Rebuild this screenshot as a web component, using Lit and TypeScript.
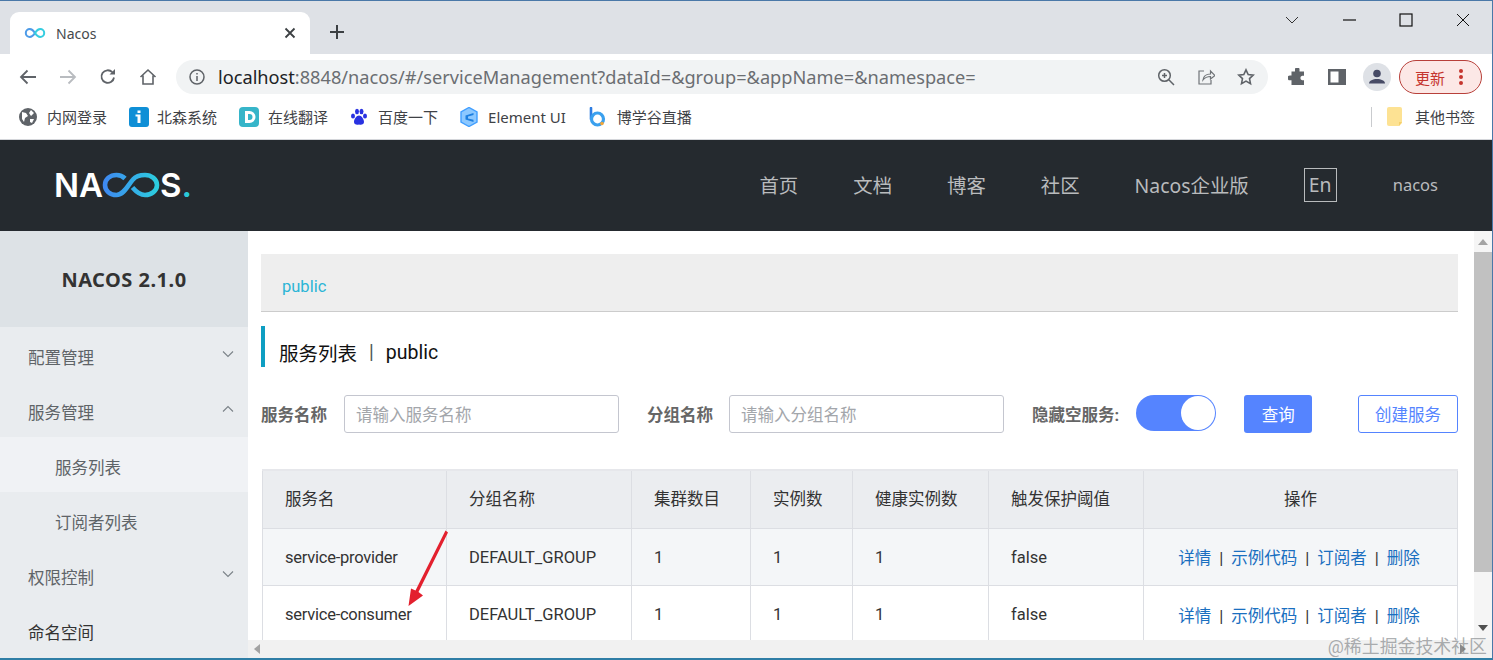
import { LitElement, html, css } from 'lit';
import { customElement } from 'lit/decorators.js';

const chevron = (up: boolean) => html`<svg class="chev" width="14" height="14" viewBox="0 0 14 14" fill="none" stroke="#7b8288" stroke-width="1.1">
  <path d=${up ? 'M2 9.5L7 4.5L12 9.5' : 'M2 4.5L7 9.5L12 4.5'}></path></svg>`;

const services = ['service-provider', 'service-consumer'];
const menu = [
  { label: '配置管理', arrow: 'down' },
  { label: '服务管理', arrow: 'up' },
  { label: '服务列表', sub: true, active: true },
  { label: '订阅者列表', sub: true },
  { label: '权限控制', arrow: 'down' },
  { label: '命名空间' },
];
const heads = ['服务名', '分组名称', '集群数目', '实例数', '健康实例数', '触发保护阈值', '操作'];

@customElement('app-root')
export class AppRoot extends LitElement {
  static styles = css`
    :host {
      display: block;
      width: 1493px;
      height: 660px;
      overflow: hidden;
      position: relative;
      font-family: Roboto, 'Noto Sans CJK SC', sans-serif;
      color: #333;
    }
    * { box-sizing: border-box; }
    .window {
      height: 660px;
      display: flex;
      flex-direction: column;
      border-top: 1px solid #4a78a8;
      border-right: 1px solid #4a78a8;
      border-bottom: 2px solid #2f7ea6;
    }

    /* browser chrome */
    .tabs {
      height: 53px;
      flex: none;
      background: #dee1e6;
      display: flex;
      align-items: flex-end;
      padding-left: 10px;
      position: relative;
    }
    .tab {
      width: 300px;
      height: 42px;
      background: #fff;
      border-radius: 9px 9px 0 0;
      display: flex;
      align-items: center;
      padding: 0 13px 0 14px;
      font-family: 'Noto Sans', sans-serif;
      font-size: 14px;
      color: #45494d;
    }
    .tab .title { margin-left: 10px; flex: 1; }
    .plus { margin: 0 0 7px 19px; align-self: flex-end; height: 30px; display: flex; align-items: center; }
    .win-btns {
      margin-left: auto;
      display: flex;
      align-self: flex-start;
      align-items: center;
      height: 38px;
      padding-right: 22px;
      gap: 43px;
    }
    .toolbar {
      height: 40px;
      margin-top: 3px;
      flex: none;
      display: flex;
      align-items: center;
      padding-left: 8px;
      background: #fff;
    }
    .tool { width: 40px; height: 34px; display: flex; align-items: center; justify-content: center; flex: none; }
    .tool.puzzle { margin-left: 9px; }
    .address {
      margin-left: 8px;
      width: 1092px;
      height: 34px;
      border-radius: 17px;
      background: #f1f3f4;
      display: flex;
      align-items: center;
      padding: 0 2px 0 13px;
      flex: none;
    }
    .url {
      margin-left: 13px;
      flex: 1;
      font-family: 'Noto Sans', sans-serif;
      font-size: 18.2px;
      color: #6b6e72;
      white-space: nowrap;
    }
    .url b { font-weight: 400; color: #202124; }
    .pill {
      margin-left: 2px;
      width: 83px;
      height: 34px;
      border: 1.5px solid #b8403a;
      border-radius: 17px;
      background: #fce8e6;
      color: #c5352e;
      font-size: 15px;
      display: flex;
      align-items: center;
      padding-left: 15px;
    }
    .pill .dots { margin-left: 13px; display: flex; }
    .bookmarks {
      height: 43px;
      flex: none;
      display: flex;
      align-items: center;
      padding: 0 17px 3px 19px;
      gap: 22px;
      font-size: 15px;
      color: #3f4246;
      border-bottom: 1px solid #d4d6da;
      background: #fff;
    }
    .bm { display: flex; align-items: center; gap: 10px; white-space: nowrap; }
    .bm svg { flex: none; }
    .bm .tight { margin-left: -1px; }
    .bm .tighter { margin-left: -2px; }
    .bm .latin { font-family: 'Noto Sans', sans-serif; font-size: 15px; }
    .bm-other { margin-left: auto; display: flex; align-items: center; gap: 12px; }
    .bm-sep { width: 1px; height: 20px; background: #c9cbce; margin-right: 3px; }

    /* nacos header */
    .header {
      height: 91px;
      flex: none;
      background: #252a2f;
      display: flex;
      align-items: center;
      padding: 0 54px 0 54px;
      color: #b9bbbd;
      font-size: 19.4px;
      font-family: 'Noto Sans', 'Noto Sans CJK SC', sans-serif;
    }
    .logo {
      display: flex;
      align-items: center;
      color: #fff;
      font-family: Inter, 'Noto Sans', sans-serif;
      font-weight: 600;
      font-size: 33px;
      margin-top: -2px;
    }
    .logo .dot { color: #2bc9d8; }
    .logo svg { margin: 0 0 0 -1px; }
    .nav { margin-left: auto; display: flex; align-items: center; gap: 55px; margin-top: -2px; }
    .lang {
      width: 33px;
      height: 34px;
      margin-right: 1px;
      border: 1px solid #b9bbbd;
      display: flex;
      align-items: center;
      justify-content: center;
    }
    .user { font-size: 16.5px; }

    /* page body */
    .body { flex: 1; min-height: 0; display: flex; }
    .sidebar { width: 248px; flex: none; background: #e9ecef; }
    .version {
      height: 96px;
      background: #dde2e6;
      display: flex;
      align-items: center;
      justify-content: center;
      font-family: 'Noto Sans', sans-serif;
      font-size: 20px;
      font-weight: 700;
      letter-spacing: .5px;
      color: #333;
    }
    .item {
      height: 55px;
      display: flex;
      align-items: center;
      justify-content: space-between;
      padding: 4px 13px 0 28px;
      font-size: 16.5px;
      color: #5f6468;
    }
    .item .chev { margin-top: -6px; }
    .item.sub { padding-left: 55px; }
    .item.active { background: #f0f2f5; }
    .item.last { color: #333; }

    .main { flex: 1; min-width: 0; display: flex; flex-direction: column; background: #fff; }
    .row { flex: 1; min-height: 0; display: flex; }
    .content { flex: 1; min-width: 0; overflow: hidden; padding: 23px 16px 0 13px; }
    .crumb {
      height: 58px;
      background: #eee;
      border-bottom: 1px solid #ccc;
      padding: 20px 0 0 21px;
      font-size: 16.5px;
      line-height: 26px;
      color: #2bb5d6;
    }
    .page-title {
      margin-top: 14px;
      height: 41px;
      border-left: 4px solid #0e9ec2;
      padding: 12px 0 0 14px;
      display: flex;
      align-items: center;
      font-size: 19.5px;
      color: #111;
    }
    .page-title .sep { margin: 0 12px; color: #4a5a55; }
    .filters { margin-top: 28px; height: 38px; display: flex; align-items: center; }
    .filters label { font-size: 16.5px; font-weight: 700; color: #666; white-space: nowrap; }
    .input {
      width: 275px;
      height: 38px;
      border: 1px solid #c4c6cf;
      border-radius: 3px;
      padding-left: 11px;
      display: flex;
      align-items: center;
      font-size: 16.5px;
      color: #a3a6ab;
      margin: 0 28px 0 16px;
    }
    .input.first { margin-left: 17px; }
    .switch {
      margin-left: 17px;
      width: 80px;
      height: 36px;
      border-radius: 18px;
      background: #5584ff;
      position: relative;
      margin-top: -2px;
    }
    .switch::after {
      content: '';
      position: absolute;
      right: 1px;
      top: 1px;
      width: 34px;
      height: 34px;
      border-radius: 50%;
      background: #fff;
    }
    .btn {
      height: 38px;
      border-radius: 3px;
      display: flex;
      align-items: center;
      justify-content: center;
      font-size: 16.5px;
    }
    .btn.primary { margin-left: 28px; width: 68px; background: #5584ff; color: #fff; }
    .btn.ghost { margin-left: auto; width: 100px; border: 1px solid #5584ff; color: #5584ff; background: #fff; }

    table {
      margin: 36px 0 0 1px;
      width: calc(100% - 1px);
      table-layout: fixed;
      border-collapse: collapse;
      border-top: 2px solid #e6e7eb;
      font-size: 16.5px;
      color: #333;
    }
    th, td {
      text-align: left;
      font-weight: 400;
      padding: 0 0 0 22px;
      border: 1px solid #dcdee3;
      white-space: nowrap;
    }
    th { height: 58px; padding-bottom: 2px; background: #ebedf0; border-top: none; border-bottom: none; }
    td { height: 57.5px; padding-top: 1px; }
    td:first-child { letter-spacing: -.25px; }
    tr.odd td { background: #f4f6f8; }
    th:nth-child(1) { width: 184px; }
    th:nth-child(2) { width: 185px; }
    th:nth-child(3) { width: 119px; }
    th:nth-child(4) { width: 102px; }
    th:nth-child(5) { width: 136px; }
    th:nth-child(6) { width: 155px; }
    th:last-child { text-align: center; padding: 0 0 2px; }
    td:last-child { text-align: center; padding: 1px 3px 0 0; }
    a { color: #1a6fc0; text-decoration: none; }
    .pipe { margin: 0 8px; color: #333; }

    .vbar { width: 18px; flex: none; background: #f5f5f5; display: flex; flex-direction: column; align-items: center; }
    .vbar .arrow { height: 21px; flex: none; display: flex; align-items: center; justify-content: center; }
    .vbar .thumb { width: 18px; height: 320px; background: #c1c1c1; flex: none; }
    .vbar .arrow.down { margin-top: auto; height: 24px; }
    .hbar {
      height: 18px;
      flex: none;
      background: #f1f1f1;
      display: flex;
      align-items: center;
      justify-content: space-between;
      padding: 0 26px 0 6px;
    }

    /* over the content */
    .mark { position: absolute; left: 0; top: 0; pointer-events: none; }
    .watermark {
      position: absolute;
      right: 6px;
      top: 632px;
      font-size: 17.9px;
      color: rgba(120, 124, 128, .62);
      white-space: nowrap;
    }
  `;

  render() {
    return html`
      <div class="window">
        <div class="tabs">
          <div class="tab">
            <svg width="22" height="14" viewBox="0 0 22 14" fill="none" stroke-width="2">
              <path d="M11 7C9.5 4.6 8 3 5.8 3a4 4 0 0 0 0 8c2.2 0 3.700-1.600 5.200-4z" stroke="#4d9be8"></path>
              <path d="M11 7c1.500-2.400 3-4 5.200-4a4 4 0 0 1 0 8c-2.200 0-3.700-1.600-5.200-4z" stroke="#35cde0"></path>
            </svg>
            <span class="title">Nacos</span>
            <svg width="14" height="14" viewBox="0 0 14 14" stroke="#3c4043" stroke-width="1.800"><path d="M2.500 2.500l9 9M11.500 2.500l-9 9"></path></svg>
          </div>
          <div class="plus">
            <svg width="16" height="16" viewBox="0 0 16 16" stroke="#3c4043" stroke-width="2"><path d="M8 1v14M1 8h14"></path></svg>
          </div>
          <div class="win-btns">
            <svg width="14" height="14" viewBox="0 0 14 14" fill="none" stroke="#333" stroke-width="1"><path d="M1 4l6 6 6-6"></path></svg>
            <svg width="14" height="14" viewBox="0 0 14 14" stroke="#111" stroke-width="1.200"><path d="M1 7h13"></path></svg>
            <svg width="14" height="14" viewBox="0 0 14 14" fill="none" stroke="#111" stroke-width="1.200"><rect x="1" y="1" width="12" height="12"></rect></svg>
            <svg width="14" height="14" viewBox="0 0 14 14" stroke="#111" stroke-width="1"><path d="M1 1l12 12M13 1L1 13"></path></svg>
          </div>
        </div>

        <div class="toolbar">
          <div class="tool"><svg width="18" height="16" viewBox="0 0 18 16" fill="none" stroke="#5f6368" stroke-width="1.800"><path d="M17 8H2M8.500 1.500L2 8l6.500 6.500"></path></svg></div>
          <div class="tool"><svg width="18" height="16" viewBox="0 0 18 16" fill="none" stroke="#b9bcc0" stroke-width="1.800"><path d="M1 8h15M9.500 1.500L16 8l-6.500 6.500"></path></svg></div>
          <div class="tool"><svg width="18" height="18" viewBox="0 0 18 18" fill="none" stroke="#5f6368" stroke-width="1.800"><path d="M15 9.500A6.300 6.300 0 1 1 13.300 4.200"></path><path d="M16 1v5.500h-5.500" fill="#5f6368" stroke="none"></path></svg></div>
          <div class="tool"><svg width="18" height="18" viewBox="0 0 18 18" fill="none" stroke="#5f6368" stroke-width="1.600"><path d="M1.500 9L9 2l7.500 7M4 7.500V16h10V7.500"></path></svg></div>
          <div class="address">
            <svg width="16" height="16" viewBox="0 0 16 16" fill="none" stroke="#5f6368" stroke-width="1.500"><circle cx="8" cy="8" r="7"></circle><path d="M8 7v5M8 4v1.600"></path></svg>
            <span class="url"><b>localhost</b>:8848/nacos/#/serviceManagement?dataId=&amp;group=&amp;appName=&amp;namespace=</span>
            <div class="tool"><svg width="18" height="18" viewBox="0 0 18 18" fill="none" stroke="#5f6368" stroke-width="1.500"><circle cx="7.500" cy="7.500" r="5.800"></circle><path d="M11.800 11.800L17 17M7.500 5v5M5 7.500h5"></path></svg></div>
            <div class="tool"><svg width="18" height="18" viewBox="0 0 18 18" fill="none" stroke="#6f7377" stroke-width="1.200"><path d="M7 3H2v13h12v-4"></path><path d="M6 12c.5-4 3.500-6 7.500-6V3L18 7.500 13.500 11V8.500c-3 0-5.500 1-7.500 3.500z"></path></svg></div>
            <div class="tool"><svg width="18" height="18" viewBox="0 0 18 18" fill="none" stroke="#5f6368" stroke-width="1.600"><path d="M9 1.800l2.200 4.700 5 .6-3.700 3.500 1 5L9 13.100l-4.500 2.500 1-5L1.800 7.100l5-.6z"></path></svg></div>
          </div>
          <div class="tool puzzle"><svg width="18" height="18" viewBox="0 0 18 18" fill="#5f6368"><path d="M7 1a2.300 2.300 0 0 1 4.500 0v2.500H16v4.300h-1.800a2.300 2.300 0 0 0 0 4.500H16V17H3.500v-4.700H2a2.400 2.400 0 0 1 0-4.800h1.500v-4H7z"></path></svg></div>
          <div class="tool"><svg width="18" height="18" viewBox="0 0 18 18" fill="#5f6368"><path d="M0 1h18v16H0z"></path><rect x="2.500" y="3.500" width="8" height="11" fill="#fff"></rect></svg></div>
          <div class="tool">
            <svg width="28" height="28" viewBox="0 0 28 28"><circle cx="14" cy="14" r="14" fill="#dee1e6"></circle><circle cx="14" cy="10.500" r="3.800" fill="#474b66"></circle><path d="M6 20.500c0-3 4-4.500 8-4.500s8 1.500 8 4.500z" fill="#474b66"></path></svg>
          </div>
          <div class="pill">更新
            <span class="dots"><svg width="6" height="18" viewBox="0 0 6 18" fill="#c5352e"><circle cx="3" cy="3" r="2"></circle><circle cx="3" cy="9" r="2"></circle><circle cx="3" cy="15" r="2"></circle></svg></span>
          </div>
        </div>

        <div class="bookmarks">
          <div class="bm">
            <svg width="18" height="18" viewBox="0 0 18 18"><circle cx="9" cy="9" r="9" fill="#5f6368"></circle><path d="M3 4l4 1 2 3-3 2-1 4-2-3zM12 2l3 3-3 3-2-3zM11 11h4l-2 4-2-1z" fill="#fff"></path></svg>
            内网登录
          </div>
          <div class="bm">
            <svg width="20" height="20" viewBox="0 0 20 20"><rect width="20" height="20" rx="3" fill="#0f8fd6"></rect><path d="M8.500 7.500h3V16h-3zM6.500 7.500h2v2h-2zM8.500 3.500h3v2.500h-3z" fill="#fff"></path></svg>
            <span class="tighter">北森系统</span>
          </div>
          <div class="bm">
            <svg width="20" height="20" viewBox="0 0 20 20"><rect width="20" height="20" rx="4" fill="#36b5c9"></rect><path d="M6 4h4.500a6 6 0 0 1 0 12H6zM9 7v6h1.500a3 3 0 0 0 0-6z" fill="#fff" fill-rule="evenodd"></path></svg>
            <span class="tight">在线翻译</span>
          </div>
          <div class="bm">
            <svg width="18" height="18" viewBox="0 0 18 18" fill="#2932e1"><ellipse cx="3" cy="8" rx="2" ry="2.600"></ellipse><ellipse cx="7" cy="3.500" rx="2" ry="2.700"></ellipse><ellipse cx="11.500" cy="3.500" rx="2" ry="2.700"></ellipse><ellipse cx="15" cy="8" rx="2" ry="2.600"></ellipse><path d="M9 7.500c2.500 0 5 3.500 5 6.500 0 2.500-2.500 3-5 2.500-2.500.5-5 0-5-2.500 0-3 2.500-6.500 5-6.500z"></path></svg>
            百度一下
          </div>
          <div class="bm">
            <svg width="18" height="20" viewBox="0 0 18 20"><path d="M9 .5l8 4.500v10l-8 4.500-8-4.500V5z" fill="#8cc8ff" stroke="#409eff" stroke-width="1.400"></path><path d="M13.500 6l-8 2.500v4l8 2.500v-2.200L8 11.500v-2l5.500-1.500z" fill="#1d7fe0"></path></svg>
            <span class="latin">Element UI</span>
          </div>
          <div class="bm">
            <svg width="19" height="20" viewBox="0 0 19 20" fill="none"><path d="M3 1v11" stroke="#2f7de1" stroke-width="2.600" stroke-linecap="round"></path><circle cx="9.500" cy="12" r="6" stroke="#3aa0ee" stroke-width="3.200"></circle><circle cx="14" cy="16.500" r="1.800" fill="#f2a63a"></circle></svg>
            博学谷直播
          </div>
          <div class="bm-other">
            <span class="bm-sep"></span>
            <svg width="16" height="19" viewBox="0 0 16 19"><path d="M2 0h11a2 2 0 0 1 2 2v14l-3 3H2a2 2 0 0 1-2-2V2a2 2 0 0 1 2-2z" fill="#fde293"></path><path d="M15 15h-3v4z" fill="#f5cf6a"></path></svg>
            其他书签
          </div>
        </div>

        <div class="header">
          <div class="logo">
            NA
            <svg width="58" height="26" viewBox="0 0 58 26" fill="none" stroke-width="4.600">
              <defs><linearGradient id="lg" gradientUnits="userSpaceOnUse" x1="0" x2="58" y1="0" y2="0"><stop offset="0" stop-color="#3f86f2"></stop><stop offset="1" stop-color="#2bd0de"></stop></linearGradient></defs>
              <path d="M23 6.500C20.500 4 18 3 14.500 3 8 3 3 7.300 3 13s5 10 11.500 10C22 23 26 13 31 7.500 33.500 4.500 37 3 43 3c6.500 0 12 4.300 12 10s-5.500 10-12 10c-6 0-9.500-4-12.500-7.500" stroke="url(#lg)"></path>
            </svg>
            S<span class="dot">.</span>
          </div>
          <div class="nav">
            <span>首页</span><span>文档</span><span>博客</span><span>社区</span><span>Nacos企业版</span>
            <span class="lang">En</span>
            <span class="user">nacos</span>
          </div>
        </div>

        <div class="body">
          <div class="sidebar">
            <div class="version">NACOS 2.1.0</div>
            ${menu.map(m => html`
              <div class="item ${m.sub ? 'sub' : ''} ${m.active ? 'active' : ''} ${m.label === '命名空间' ? 'last' : ''}">
                <span>${m.label}</span>
                ${m.arrow ? chevron(m.arrow === 'up') : ''}
              </div>`)}
          </div>

          <div class="main">
            <div class="row">
              <div class="content">
                <div class="crumb">public</div>
                <div class="page-title">服务列表<span class="sep">|</span>public</div>
                <div class="filters">
                  <label>服务名称</label>
                  <div class="input first">请输入服务名称</div>
                  <label>分组名称</label>
                  <div class="input">请输入分组名称</div>
                  <label>隐藏空服务:</label>
                  <div class="switch"></div>
                  <div class="btn primary">查询</div>
                  <div class="btn ghost">创建服务</div>
                </div>
                <table>
                  <thead><tr>${heads.map(h => html`<th>${h}</th>`)}</tr></thead>
                  <tbody>
                    ${services.map((s, i) => html`
                      <tr class=${i % 2 ? '' : 'odd'}>
                        <td>${s}</td><td>DEFAULT_GROUP</td><td>1</td><td>1</td><td>1</td><td>false</td>
                        <td><a>详情</a><span class="pipe">|</span><a>示例代码</a><span class="pipe">|</span><a>订阅者</a><span class="pipe">|</span><a>删除</a></td>
                      </tr>`)}
                  </tbody>
                </table>
              </div>
              <div class="vbar">
                <div class="arrow"><svg width="10" height="6" viewBox="0 0 10 6" fill="#a3a3a3"><path d="M5 0l5 6H0z"></path></svg></div>
                <div class="thumb"></div>
                <div class="arrow down"><svg width="10" height="6" viewBox="0 0 10 6" fill="#505050"><path d="M5 6L0 0h10z"></path></svg></div>
              </div>
            </div>
            <div class="hbar">
              <svg width="6" height="10" viewBox="0 0 6 10" fill="#a3a3a3"><path d="M0 5l6-5v10z"></path></svg>
              <svg width="6" height="10" viewBox="0 0 6 10" fill="#8a8a8a"><path d="M6 5L0 0v10z"></path></svg>
            </div>
          </div>
        </div>
      </div>

      <svg class="mark" width="1493" height="660" viewBox="0 0 1493 660">
        <path d="M445.500 530.500L448 532.500 418.500 592 423 595.500 408.500 606 411 588.500 415.500 590.500z" fill="#e3202e"></path>
      </svg>
      <div class="watermark">@稀土掘金技术社区</div>
    `;
  }
}
